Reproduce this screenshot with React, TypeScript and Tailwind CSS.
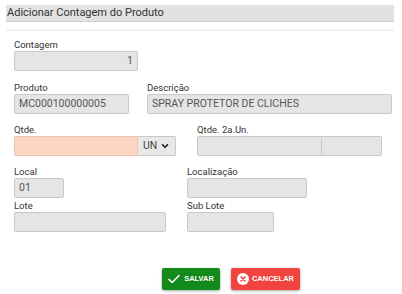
import { ChevronDown } from "lucide-react";

const inputBase = "h-[20px] rounded-[2px] border border-[#c9c9c9] bg-[#e5e5e5] px-[4px] text-[10.5px] leading-[18px] text-[#555]";

function Field({ label, width, value, right, className = "" }: { label: string; width: number; value?: string; right?: boolean; className?: string }) {
  return (
    <div className={className}>
      <div className="mb-[1px] text-[9.5px] leading-[10px] text-[#333]">{label}</div>
      <div className={`${inputBase} ${right ? "text-right" : ""}`} style={{ width }}>{value}</div>
    </div>
  );
}

export default function App() {
  return (
    <div className="h-[294px] w-[402px] bg-white font-['Roboto',sans-serif]">
      <div className="pt-[5px]">
        <div className="ml-[6px] h-[17px] w-[388px] border-b border-[#d0d0d0] bg-[#e2e2e2] pl-[1px] text-[11px] leading-[16px] text-[#333]">Adicionar Contagem do Produto</div>
        <div className="ml-[6px] mt-[7px] h-[2px] w-[388px] bg-[#f1f1f1]" />
      </div>

      <div className="pl-[14px]">
        <Field label="Contagem" width={124} value="1" right className="mt-[9px]" />

        <div className="mt-[12px] flex gap-[18px]">
          <Field label="Produto" width={115} value="MC000100000005" />
          <Field label="Descrição" width={245} value="SPRAY PROTETOR DE CLICHES" />
        </div>

        <div className="mt-[11px] flex">
          <div>
            <div className="mb-[1px] text-[9.5px] leading-[10px] text-[#333]">Qtde.</div>
            <div className="flex">
              <div className="h-[20px] w-[124px] rounded-l-[2px] border border-[#efc4ac] bg-[#fdd6c3]" />
              <div className="flex h-[20px] w-[38px] items-center gap-[3px] rounded-r-[2px] border border-l-0 border-[#c9c9c9] bg-[#e8e8e8] pl-[5px] text-[10.5px] text-[#444]">
                UN
                <ChevronDown className="h-[10px] w-[10px] text-[#222]" strokeWidth={4} />
              </div>
            </div>
          </div>
          <div className="ml-[21px]">
            <div className="mb-[1px] text-[9.5px] leading-[10px] text-[#333]">Qtde. 2a.Un.</div>
            <div className="flex">
              <div className="h-[20px] w-[125px] rounded-l-[2px] border border-[#c9c9c9] bg-[#e5e5e5]" />
              <div className="h-[20px] w-[60px] rounded-r-[2px] border border-l-0 border-[#c9c9c9] bg-[#e5e5e5]" />
            </div>
          </div>
        </div>

        <div className="mt-[11px] flex">
          <Field label="Local" width={50} value="01" className="w-[173px]" />
          <Field label="Localização" width={120} />
        </div>

        <div className="mt-[3px] flex">
          <Field label="Lote" width={152} className="w-[173px]" />
          <Field label="Sub Lote" width={87} />
        </div>
      </div>

      <div className="mt-[36px] flex gap-[11px] pl-[162px]">
        <button className="flex h-[22px] w-[58px] items-center justify-center gap-[4px] rounded-[2px] bg-[#128a1c] text-[7.5px] font-bold text-white shadow-[0_1px_3px_rgba(0,0,0,0.35)] font-['Liberation_Sans',sans-serif]">
          <svg width="12" height="10" viewBox="0 0 12 10" fill="none">
            <path d="M1 5.5 L4.2 8.5 L11 1.5" stroke="white" strokeWidth="1.6" strokeLinecap="round" strokeLinejoin="round" />
          </svg>
          SALVAR
        </button>
        <button className="flex h-[22px] w-[69px] items-center justify-center gap-[3px] rounded-[2px] bg-[#f2443f] text-[7.5px] font-bold text-white shadow-[0_1px_3px_rgba(0,0,0,0.35)] font-['Liberation_Sans',sans-serif]">
          <svg width="12" height="12" viewBox="0 0 12 12">
            <circle cx="6" cy="6" r="6" fill="white" />
            <path d="M4 4 L8 8 M8 4 L4 8" stroke="#f2443f" strokeWidth="1.6" strokeLinecap="round" />
          </svg>
          CANCELAR
        </button>
      </div>
    </div>
  );
}
